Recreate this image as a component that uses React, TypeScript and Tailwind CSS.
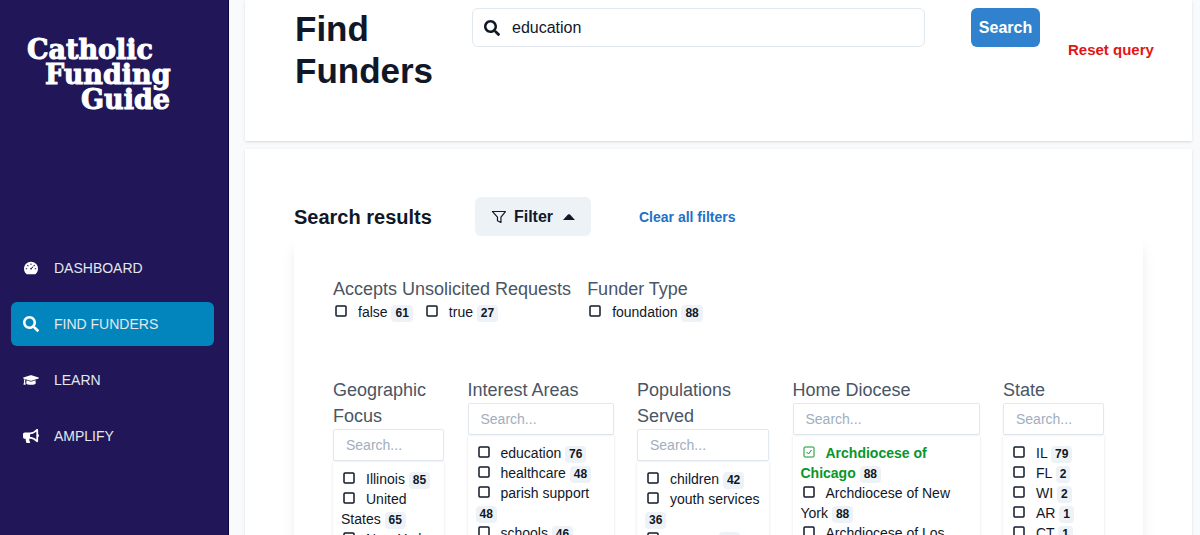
import React from 'react';
import { FaSearch, FaGraduationCap, FaBullhorn } from 'react-icons/fa';
import { AiFillDashboard } from 'react-icons/ai';
import { clsx } from 'clsx';

interface FacetValue {
  label: string;
  count: number;
  checked?: boolean;
}

interface FacetProps {
  title: string;
  values: FacetValue[];
  className?: string;
}

const navItems = [
  { label: 'DASHBOARD', icon: AiFillDashboard },
  { label: 'FIND FUNDERS', icon: FaSearch, active: true },
  { label: 'LEARN', icon: FaGraduationCap },
  { label: 'AMPLIFY', icon: FaBullhorn },
];

const facets: FacetProps[] = [
  {
    title: 'Geographic Focus',
    className: 'w-[111px]',
    values: [
      { label: 'Illinois', count: 85 },
      { label: 'United States', count: 65 },
      { label: 'New York', count: 61 },
    ],
  },
  {
    title: 'Interest Areas',
    className: 'w-[146px]',
    values: [
      { label: 'education', count: 76 },
      { label: 'healthcare', count: 48 },
      { label: 'parish support', count: 48 },
      { label: 'schools', count: 46 },
    ],
  },
  {
    title: 'Populations Served',
    className: 'w-[132px]',
    values: [
      { label: 'children', count: 42 },
      { label: 'youth services', count: 36 },
      { label: 'women', count: 30 },
    ],
  },
  {
    title: 'Home Diocese',
    className: 'w-[187px]',
    values: [
      { label: 'Archdiocese of Chicago', count: 88, checked: true },
      { label: 'Archdiocese of New York', count: 88 },
      { label: 'Archdiocese of Los Angeles', count: 70 },
    ],
  },
  {
    title: 'State',
    className: 'w-[101px]',
    values: [
      { label: 'IL', count: 79 },
      { label: 'FL', count: 2 },
      { label: 'WI', count: 2 },
      { label: 'AR', count: 1 },
      { label: 'CT', count: 1 },
    ],
  },
];

function FilterIcon() {
  return (
    <svg viewBox="0 0 16 16" fill="none" stroke="currentColor" strokeWidth="1.2" strokeLinejoin="round" className="h-4 w-4">
      <path d="M1.5 2.5h13L10 8.2v5.3l-3.5-1.7V8.2z" />
    </svg>
  );
}

function FacetOption({ label, count, checked }: FacetValue) {
  return (
    <label className={clsx('block text-sm leading-5', checked && 'font-bold text-[#08962a]')}>
      <input type="checkbox" defaultChecked={checked} className="sr-only" />
      <svg
        viewBox="0 0 12 12"
        fill="none"
        stroke="currentColor"
        className={clsx('mr-[11px] ml-0.5 inline h-3 w-3 align-baseline', checked ? 'stroke-1' : 'stroke-[1.5]')}
      >
        <rect x="1" y="1" width="10" height="10" rx="1" />
        {checked && <path d="M3.5 6l2 2 3-4" />}
      </svg>
      {label}{' '}
      <span className="inline-block rounded-sm bg-[#edf2f7] px-1 text-xs leading-[17px] font-bold text-gray-900">
        {count}
      </span>
    </label>
  );
}

function Facet({ title, values, className }: FacetProps) {
  return (
    <section className={className}>
      <h3 className="text-lg leading-[26px] text-gray-600">{title}</h3>
      <input
        type="text"
        placeholder="Search..."
        aria-label={`Search ${title}`}
        className="block h-8 w-full rounded-xs border border-[#e2e8f0] bg-white px-3 text-sm shadow-xs placeholder:text-[#a0aec0]"
      />
      <ul className="px-2 pt-2 shadow-sm">
        {values.map((value) => (
          <li key={value.label}>
            <FacetOption {...value} />
          </li>
        ))}
      </ul>
    </section>
  );
}

function Sidebar() {
  return (
    <aside className="w-[229px] shrink-0 border-r border-[#0b0540] bg-[#201658] pr-[14px] pl-[11px]">
      <a
        href="#"
        className="block h-[246px] pt-[37px] pl-4 font-['DejaVu_Serif',serif] text-[27px] leading-[25px] font-bold text-white [-webkit-text-stroke:1px_white]"
      >
        <span className="block">Catholic</span>
        <span className="block pl-[18px]">Funding</span>
        <span className="block pl-[54px]">Guide</span>
      </a>
      <nav className="flex flex-col gap-3">
        {navItems.map(({ label, icon: Icon, active }) => (
          <a
            key={label}
            href="#"
            className={clsx(
              'flex h-11 items-center gap-[15px] rounded-md px-3 text-sm text-gray-200',
              active && 'bg-[#0284bc]'
            )}
          >
            <Icon className="h-4 w-4 text-white" />
            {label}
          </a>
        ))}
      </nav>
    </aside>
  );
}

export default function App() {
  return (
    <div className="flex h-screen overflow-hidden bg-[#f9fafc] font-['Liberation_Sans',Arial,sans-serif] text-gray-900">
      <Sidebar />
      <main className="flex min-w-0 flex-1 flex-col gap-2 pr-2 pl-4">
        <header className="flex h-[141px] shrink-0 items-start bg-white pt-2 pr-9 pl-[50px] shadow-sm">
          <h1 className="w-[177px] text-[35px] leading-[42px] font-bold">Find Funders</h1>
          <label className="flex h-[39px] flex-1 items-center gap-3 rounded-md border border-[#e2e8f0] px-[11px]">
            <FaSearch className="h-4 w-4" />
            <input
              type="text"
              defaultValue="education"
              aria-label="Search funders"
              className="min-w-0 flex-1 outline-none"
            />
          </label>
          <button className="ml-[46px] h-[39px] w-[69px] rounded-md bg-[#3182ce] font-bold text-white">
            Search
          </button>
          <button className="mt-[30px] ml-7 w-[88px] text-left text-[15px] leading-6 font-bold whitespace-nowrap text-[#e01616]">
            Reset query
          </button>
        </header>

        <section className="flex-1 bg-white px-[49px] pt-12 shadow-sm">
          <div className="flex h-[39px] items-center">
            <h2 className="w-[181px] text-xl font-bold">Search results</h2>
            <button className="flex h-[39px] w-[116px] items-center rounded-md bg-[#edf2f7] px-4 font-bold">
              <FilterIcon />
              <span className="mr-[10px] ml-[7px]">Filter</span>
              <svg viewBox="0 0 12 6" fill="currentColor" className="h-1.5 w-3">
                <path d="M0 6l5-5.4q1-.9 2 0L12 6z" />
              </svg>
            </button>
            <button className="ml-12 text-sm font-bold text-[#2171c7]">Clear all filters</button>
          </div>

          <div className="px-[39px] pt-10 pb-10 shadow-lg">
            <div className="flex gap-4">
              <section>
                <h3 className="text-lg leading-[26px] text-gray-600">Accepts Unsolicited Requests</h3>
                <div className="flex gap-[11px]">
                  <FacetOption label="false" count={61} />
                  <FacetOption label="true" count={27} />
                </div>
              </section>
              <section>
                <h3 className="text-lg leading-[26px] text-gray-600">Funder Type</h3>
                <FacetOption label="foundation" count={88} />
              </section>
            </div>
            <div className="mt-[55px] flex items-start justify-between">
              {facets.map((facet) => (
                <Facet key={facet.title} {...facet} />
              ))}
            </div>
          </div>
        </section>
      </main>
    </div>
  );
}
